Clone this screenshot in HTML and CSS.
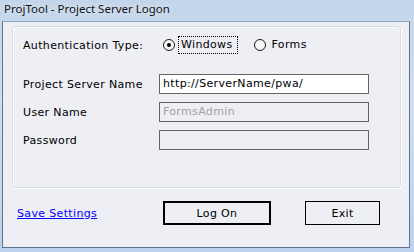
FILE: index.html
```html
<!DOCTYPE html>
<html lang="en">
<head>
    <meta charset="UTF-8">
    <meta name="viewport" content="width=device-width, initial-scale=1.0">
    <title>ProjTool - Project Server Logon</title>
    <link rel="stylesheet" href="styles.css">
</head>
<body>
    <div class="window">
        <div class="titlebar">ProjTool - Project Server Logon</div>
        <div class="client">
            <div class="groupbox">
                <div class="row auth-row">
                    <span class="label">Authentication Type:</span>
                    <div class="radios">
                        <label class="radio checked">
                            <span class="radio-dot"></span>
                            <span class="radio-text focus">Windows</span>
                        </label>
                        <label class="radio">
                            <span class="radio-dot"></span>
                            <span class="radio-text">Forms</span>
                        </label>
                    </div>
                </div>
                <div class="row field-row">
                    <span class="label">Project Server Name</span>
                    <div class="textbox">http://ServerName/pwa/</div>
                </div>
                <div class="row field-row">
                    <span class="label">User Name</span>
                    <div class="textbox disabled">FormsAdmin</div>
                </div>
                <div class="row field-row">
                    <span class="label">Password</span>
                    <div class="textbox disabled"></div>
                </div>
            </div>
            <div class="footer">
                <a href="#" class="link">Save Settings</a>
                <button class="btn default">Log On</button>
                <button class="btn exit">Exit</button>
            </div>
        </div>
    </div>
</body>
</html>
```

FILE: styles.css
```css
body {
    margin: 0;
    width: 414px;
    height: 252px;
    overflow: hidden;
    font-family: "DejaVu Sans", Verdana, sans-serif;
    font-size: 11px;
    letter-spacing: 0.35px;
    color: #000;
}
.window {
    width: 414px;
    height: 252px;
    box-sizing: border-box;
    padding: 0 4px 4px 2px;
    background: linear-gradient(to bottom, #c3d5ea 0%, #cfdff0 40%, #bcd2ec 100%);
    display: flex;
    flex-direction: column;
}
.titlebar {
    height: 21px;
    line-height: 18px;
    padding-left: 2px;
    font-family: "Noto Sans", sans-serif;
    font-size: 11.5px;
    letter-spacing: 0;
    color: #111;
    text-shadow: 0 0 6px #eef4fb;
}
.client {
    flex: 1;
    background: #eeeef5;
    border: 1px solid #5d7391;
    border-top-color: #8ea3bc;
    padding: 4px 8px 0 9px;
}
.groupbox {
    width: 377px;
    height: 151px;
    border: 1px solid #d5dfe5;
    border-radius: 3px;
    box-shadow: inset 1px 1px 0 #fff, 1px 1px 0 #fff;
    padding: 9px 0 0 10px;
}
.row {
    display: flex;
    align-items: center;
}
.label {
    width: 136px;
    flex-shrink: 0;
}
.auth-row {
    height: 18px;
    margin-bottom: 20px;
}
.field-row {
    height: 20px;
    margin-bottom: 8px;
}
.radios {
    display: flex;
    align-items: center;
    margin-left: 4px;
}
.radio {
    display: flex;
    align-items: center;
}
.radio + .radio {
    margin-left: 16px;
}
.radio-dot {
    width: 10px;
    height: 10px;
    border: 1px solid #1c1c1c;
    border-radius: 50%;
    background: #f7f7f7;
    display: flex;
    align-items: center;
    justify-content: center;
    margin-right: 3px;
}
.checked .radio-dot::after {
    content: "";
    width: 4px;
    height: 4px;
    border-radius: 50%;
    background: #000;
}
.radio-text {
    padding: 1px 4px 1px 2px;
    line-height: 14px;
    border: 1px dotted transparent;
}
.radio-text.focus {
    border-color: #000;
}
.textbox {
    width: 205px;
    height: 18px;
    border: 1px solid #646464;
    background: #fff;
    line-height: 18px;
    padding-left: 3px;
}
.textbox.disabled {
    background: #eeeef5;
    color: #a2a2a2;
}
.footer {
    display: flex;
    align-items: center;
    margin-top: 13px;
    padding-left: 5px;
}
.link {
    color: #0000ff;
    width: 146px;
}
.btn {
    font-family: "DejaVu Sans", Verdana, sans-serif;
    font-size: 11px;
    letter-spacing: 0.35px;
    color: #000;
    background: #eeeef5;
    border: 1px solid #000;
    height: 24px;
    padding: 0;
}
.btn.default {
    border-width: 2px;
    width: 108px;
}
.btn.exit {
    width: 75px;
    margin-left: 34px;
}
```
